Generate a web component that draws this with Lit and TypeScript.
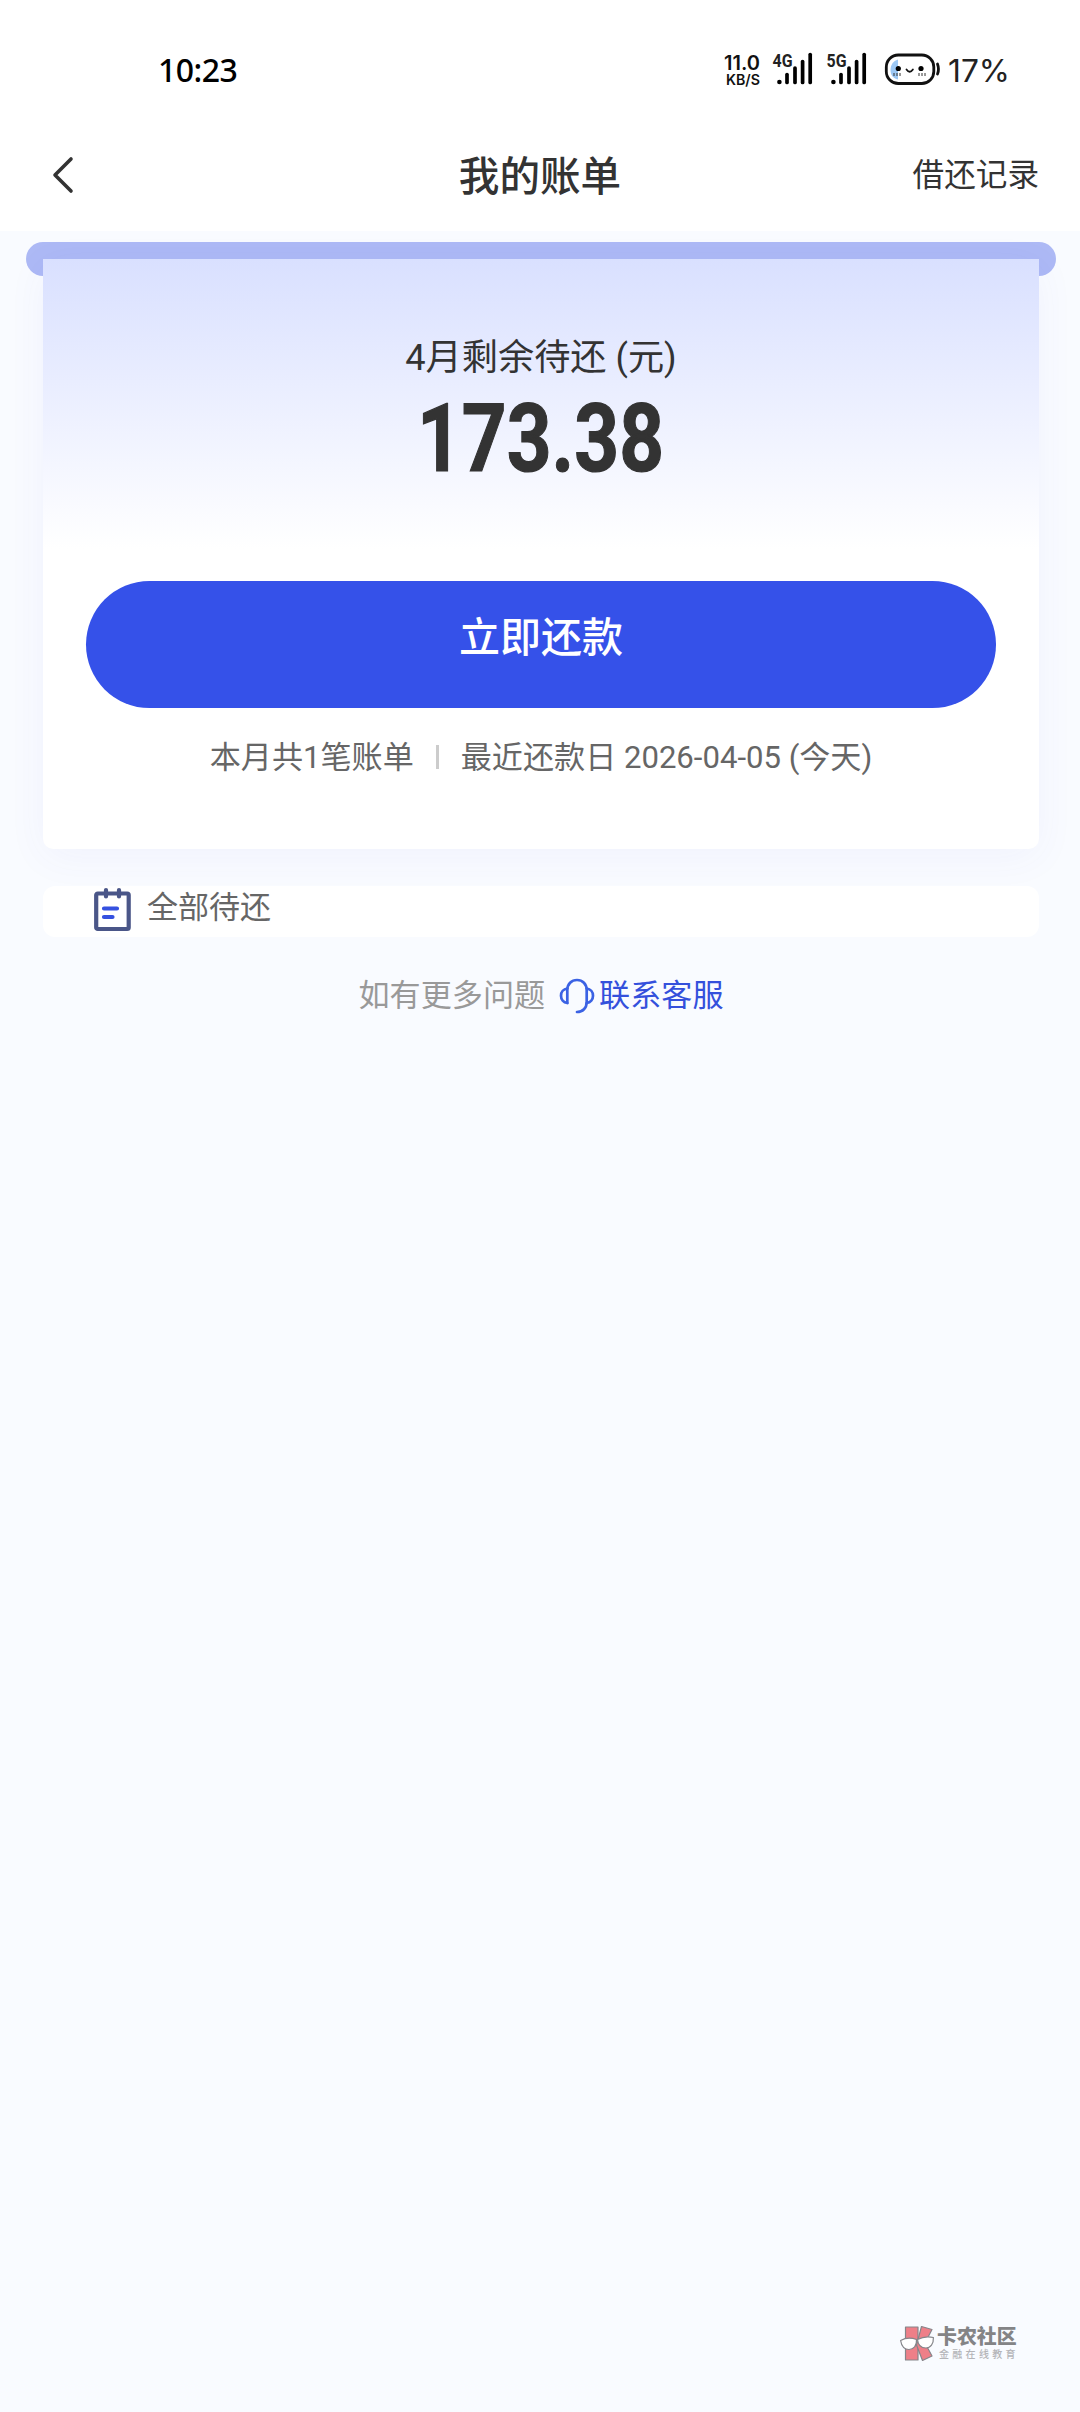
import { LitElement, html, css, svg } from "lit";
import { customElement, property } from "lit/decorators.js";

@customElement("signal-bars")
class SignalBars extends LitElement {
  @property() label = "";
  static styles = css`
    :host { display: block; width: 40px; height: 34px; }
    svg { display: block; overflow: visible; }
    text { font: 700 18.5px Roboto, sans-serif; fill: #222; }
  `;
  render() {
    return html`<svg width="40" height="34" viewBox="0 0 40 34">
      <text x="-0.5" y="14.8" textLength="20" lengthAdjust="spacingAndGlyphs">${this.label}</text>
      <circle cx="6.4" cy="30" r="2.3" fill="#000" />
      ${[[14, 21.5], [22, 15], [29.6, 8.5], [37.2, 1.5]].map(
        ([x, y]) => svg`<line x1=${x} x2=${x} y1=${y + 1} y2="30.5" stroke="#000" stroke-width="3.7" stroke-linecap="round" />`
      )}
    </svg>`;
  }
}

@customElement("app-root")
class AppRoot extends LitElement {
  static styles = css`
    :host {
      display: block;
      height: 2412px;
      background: #f9fbff;
      color: #333;
      font-family: Roboto, "Noto Sans CJK SC", sans-serif;
    }
    * { box-sizing: border-box; }
    svg { display: block; overflow: visible; }
    .page { display: flex; flex-direction: column; height: 100%; overflow: hidden; }
    .top { background: #fff; height: 231px; flex: none; }
    .status {
      display: flex; align-items: flex-start; height: 119px; padding: 51px 0 0 158px; color: #000;
    }
    .time { font: 500 32px/38px "Noto Sans", sans-serif; letter-spacing: -0.5px; width: 567px; }
    .status svg, .status signal-bars { margin-top: 1px; }
    .speed { width: 48px; }
    .speed text { font-family: Inter, sans-serif; font-weight: 600; fill: #111; }
    .status signal-bars { margin-right: 13.5px; }
    .battery { margin-left: 5px; width: 65px; }
    .battery-pct text { font: 400 31px Inter, sans-serif; fill: #222; }
    .nav {
      display: grid; grid-template-columns: 1fr auto 1fr; align-items: center;
      height: 112px; padding: 0 41px 0 51px;
    }
    .title { font-size: 40.6px; font-weight: 500; line-height: 60px; margin: 0 5px 0 -5px; padding-top: 3px; }
    .records { font-size: 31.6px; line-height: 48px; justify-self: end; padding-top: 2px; }
    .slot { height: 34px; margin: 11px 24px 0 26px; border-radius: 17px; background: #adb9f5; flex: none; }
    .card {
      flex: none;
      height: 590px; margin: -17px 41px 0 43px; padding: 76px 43px 0;
      border-radius: 0 0 10px 10px;
      background: linear-gradient(180deg, #d9e0ff 0, #fff 290px) #fff;
      box-shadow: 0 8px 40px rgba(80, 80, 210, 0.05);
      display: flex; flex-direction: column; align-items: center;
    }
    .label { font-size: 36.2px; line-height: 46px; }
    .amount { height: 68px; margin-top: 22px; }
    .amount text { font: 700 94.5px Roboto, sans-serif; fill: #333; stroke: #333; stroke-width: 1.2px; }
    .pay {
      width: 910px; height: 127px; margin-top: 110px; border: 0; border-radius: 64px; padding: 0 0 13px;
      background: #3551e9; color: #fff; font: 500 41px/60px Roboto, "Noto Sans CJK SC", sans-serif;
    }
    .info { display: flex; align-items: center; margin-top: 27px; font-size: 31.1px; line-height: 46px; color: #666; }
    .info i { width: 3px; height: 24px; margin: 0 22px 3px 22px; background: #ccc; }
    .all {
      flex: none; display: flex; align-items: flex-start;
      height: 51px; margin: 37px 41px 0 43px; padding: 1px 0 0 51px; border-radius: 12px;
      background: #fff; font-size: 31px; line-height: 46px; color: #666;
      position: relative;
    }
    .all span { margin: -2px 0 0 16px; }
    .help { display: flex; justify-content: center; align-items: center; margin-top: 36px; padding-left: 2px; font-size: 31.1px; line-height: 46px; color: #999; }
    .help svg { margin: 0 4px 0 14px; }
    .help a { color: #3450dc; }
    .brand { display: flex; margin: auto 63px 50px auto; gap: 3px; align-items: flex-start; }
    .brand-text { display: flex; flex-direction: column; width: 80px; padding-top: 1px; }
    .brand-name { font: 900 19.9px/20px "Noto Sans CJK SC", sans-serif; color: #848486; }
    .brand-sub { font: 500 10px/12px "Noto Sans CJK SC", sans-serif; letter-spacing: 3.3px; color: #b4b4b8; margin: 2px 0 0 2px; white-space: nowrap; }
  `;

  render() {
    return html`<div class="page">
      <div class="top">
        <div class="status">
          <div class="time">10:23</div>
          <svg class="speed" width="48" height="36" viewBox="0 0 48 36">
            <text x="-1" y="18" font-size="19.5" textLength="36" lengthAdjust="spacingAndGlyphs">11.0</text>
            <text x="1" y="33" font-size="14.5" textLength="34" lengthAdjust="spacingAndGlyphs">KB/S</text>
          </svg>
          <signal-bars label="4G"></signal-bars>
          <signal-bars label="5G"></signal-bars>
          <svg class="battery" width="65" height="36" viewBox="0 0 65 36">
            <path d="M13 7.500C8 9 5.500 13 5.500 18s2.500 8.500 7.500 9.500z" fill="#9cc8f5" />
            <rect x="1.300" y="3" width="47.500" height="28.500" rx="12" fill="none" stroke="#111" stroke-width="2.800" />
            <path d="M52.500 12q2 5.500 0 10" fill="none" stroke="#111" stroke-width="2.800" stroke-linecap="round" />
            <circle cx="13.300" cy="16.500" r="2.600" /><circle cx="36" cy="16.500" r="2.600" />
            <path d="M21.500 17.500q3.200 4.500 6.400 0" fill="none" stroke="#111" stroke-width="1.800" stroke-linecap="round" />
            <path d="M9 21v3M12 21v3M15 21v3M34 21v3M37 21v3M40 21v3" stroke="#333" stroke-width="1" />
          </svg>
          <svg class="battery-pct" width="60" height="36" viewBox="0 0 60 36">
            <text x="-2" y="30" textLength="62" lengthAdjust="spacingAndGlyphs">17%</text>
          </svg>
        </div>
        <div class="nav">
          <svg width="24" height="38" viewBox="0 0 24 38">
            <path d="M20 3 4 19l16 16" fill="none" stroke="#333" stroke-width="3.600" stroke-linecap="round" stroke-linejoin="round" />
          </svg>
          <div class="title">我的账单</div>
          <div class="records">借还记录</div>
        </div>
      </div>
      <div class="slot"></div>
      <div class="card">
        <div class="label">4月剩余待还 (元)</div>
        <svg class="amount" width="242" height="68" viewBox="0 0 242 68">
          <text x="-3" y="67.500" textLength="247" lengthAdjust="spacingAndGlyphs">173.38</text>
        </svg>
        <button class="pay">立即还款</button>
        <div class="info"><span>本月共1笔账单</span><i></i><span>最近还款日 2026-04-05 (今天)</span></div>
      </div>
      <div class="all">
        <svg width="37" height="45" viewBox="0 0 37 45">
          <rect x="2.200" y="6.500" width="32.500" height="35.500" rx="1.500" fill="none" stroke="#4a5688" stroke-width="4.200" />
          <path d="M12 3v6.500M25 3v6.500" stroke="#4a5688" stroke-width="4.200" stroke-linecap="round" />
          <path d="M10 21.500h13M10 30h8.500" stroke="#3551e0" stroke-width="4.200" stroke-linecap="round" />
        </svg>
        <span>全部待还</span>
      </div>
      <div class="help">
        <span>如有更多问题</span>
        <svg width="36" height="36" viewBox="0 0 36 36" fill="none" stroke="#3b62e4" stroke-width="2.700" stroke-linecap="round" stroke-linejoin="round">
          <path d="M8.300 25V12C8.300 6 12.500 2 18 2s9.700 4 9.700 10v12c0 6-4 10-9.700 10" />
          <path d="M8.300 10.500C4.500 11 2 14 2 17.800s2.500 6.700 6.300 7.200" />
          <path d="M27.700 10.500C31.500 11 34 14 34 17.800s-2.500 6.700-6.300 7.200" />
        </svg>
        <a>联系客服</a>
      </div>
      <div class="brand">
        <svg width="34" height="37" viewBox="0 0 34 37" stroke="#85858a" stroke-width="1.200" stroke-linejoin="round">
          <path d="M5.500 2H18v33H5.500z" fill="#ee7f88" />
          <path d="M21.500 1.500 32 4.500 25 18l7 13-9.500 4.500L16.500 20z" fill="#ee7f88" />
          <path d="M.6 15.500Q8 11.500 16.500 14.500c.5 6.500-3 10-7.500 10S1.500 21 .6 15.500z" fill="#fff" />
          <path d="M17.500 14.500Q25 10.500 33.400 12.500c.3 6.500-2.900 10.500-7.400 10.500s-8-3-8.500-8.500z" fill="#fff" />
        </svg>
        <div class="brand-text">
          <div class="brand-name">卡农社区</div>
          <div class="brand-sub">金融在线教育</div>
        </div>
      </div>
    </div>`;
  }
}
